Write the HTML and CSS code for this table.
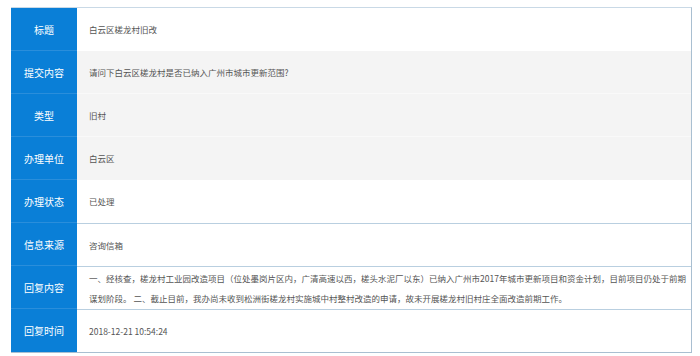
FILE: index.html
```html
<!DOCTYPE html>
<html lang="zh-CN">
<head>
<meta charset="utf-8">
<title>详情</title>
<link rel="stylesheet" href="styles.css">
</head>
<body>
<div class="detail">
  <div class="row">
    <div class="label">标题</div>
    <div class="value">白云区槎龙村旧改</div>
  </div>
  <div class="row gray">
    <div class="label">提交内容</div>
    <div class="value">请问下白云区槎龙村是否已纳入广州市城市更新范围?</div>
  </div>
  <div class="row gray">
    <div class="label">类型</div>
    <div class="value">旧村</div>
  </div>
  <div class="row gray">
    <div class="label">办理单位</div>
    <div class="value">白云区</div>
  </div>
  <div class="row">
    <div class="label">办理状态</div>
    <div class="value">已处理</div>
  </div>
  <div class="row lined">
    <div class="label">信息来源</div>
    <div class="value">咨询信箱</div>
  </div>
  <div class="row lined">
    <div class="label">回复内容</div>
    <div class="value multi">一、经核查，槎龙村工业园改造项目（位处墨岗片区内，广清高速以西，槎头水泥厂以东）已纳入广州市2017年城市更新项目和资金计划，目前项目仍处于前期谋划阶段。 二、截止目前，我办尚未收到松洲街槎龙村实施城中村整村改造的申请，故未开展槎龙村旧村庄全面改造前期工作。</div>
  </div>
  <div class="row lined last">
    <div class="label">回复时间</div>
    <div class="value">2018-12-21 10:54:24</div>
  </div>
</div>
</body>
</html>
```

FILE: styles.css
```css
html, body {
  margin: 0;
  padding: 0;
  background: #ffffff;
}

body {
  font-family: "Noto Sans CJK SC", "Microsoft YaHei", "Noto Sans", sans-serif;
}

.detail {
  margin: 7px 0 0 11px;
  width: 681px;
  border-top: 1px solid #c9d9e6;
  border-right: 1px solid #a9bfd1;
  border-bottom: 1px solid #a9bfd1;
  box-sizing: border-box;
}

.row {
  display: grid;
  grid-template-columns: 66px 1fr;
  height: 43px;
  background: #ffffff;
}

.row.gray {
  background: #f4f4f4;
}

.label {
  display: flex;
  align-items: center;
  justify-content: center;
  background: #0a7fd7;
  color: #ffffff;
  font-size: 10px;
  border-bottom: 1px solid #2a8edb;
}

.last .label {
  border-bottom: none;
}

.value {
  display: flex;
  align-items: center;
  padding: 0 0 0 12px;
  color: #555555;
  font-size: 8.5px;
  border-bottom: 1px solid transparent;
}

.gray .value {
  border-bottom-color: #f9f9f9;
}

.row:nth-child(4) .value {
  border-bottom-color: #f4f4f4;
}

.lined .value {
  border-top: 1px solid #b9cfe0;
  border-bottom: none;
}

.multi {
  line-height: 20px;
}
```
